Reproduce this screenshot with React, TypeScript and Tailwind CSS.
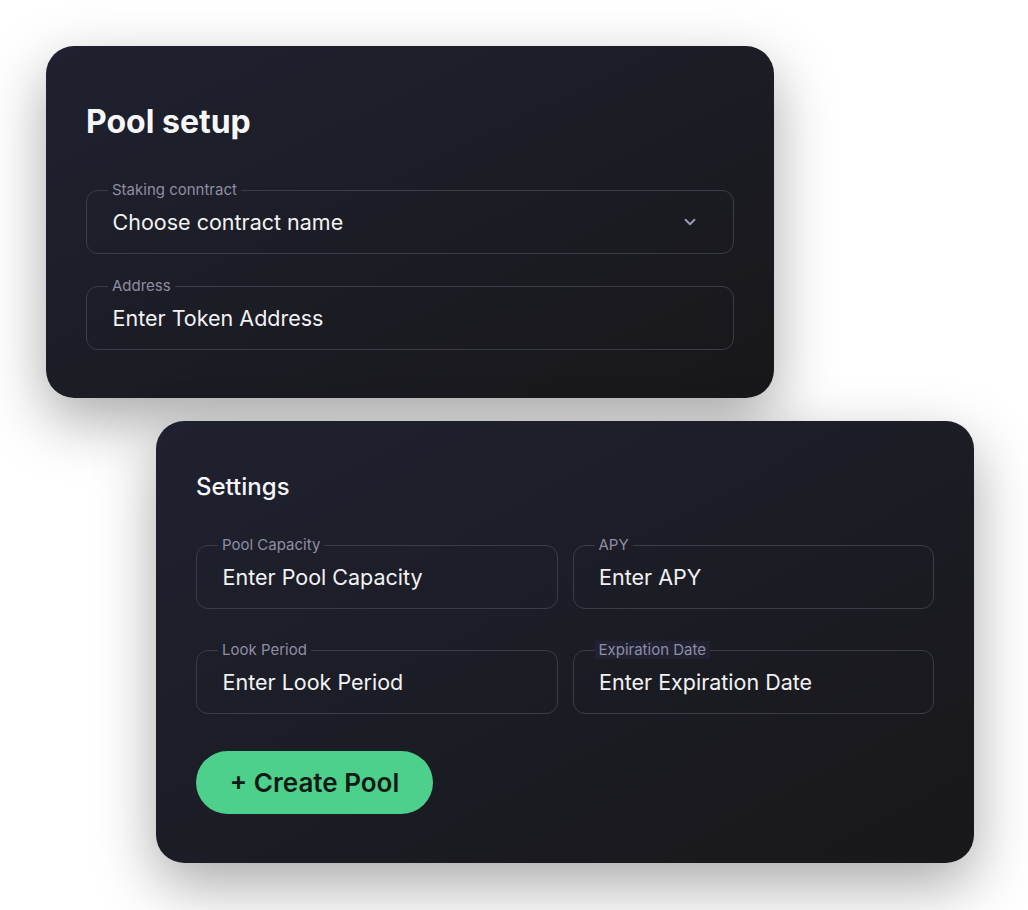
import React from "react";
import { ChevronDown } from "lucide-react";

function Field({
  label,
  value,
  chevron,
  labelClass = "",
}: {
  label: string;
  value: string;
  chevron?: boolean;
  labelClass?: string;
}) {
  return (
    <fieldset className="m-0 min-w-0 rounded-[12px] border-[1.5px] border-[#3c3c49] p-0">
      <legend
        className={`ml-[21px] px-[4px] text-[15px] leading-[18px] text-[#8f8da3] ${labelClass}`}
      >
        {label}
      </legend>
      <div className="flex items-center justify-between pl-[25.5px] pr-[34px] pt-[10px] pb-[18px]">
        <span className="text-[21.5px] leading-[26px] text-[#f2f2f4]">{value}</span>
        {chevron && (
          <ChevronDown size={18} strokeWidth={2.6} className="text-[#9c99b3]" />
        )}
      </div>
    </fieldset>
  );
}

export default function App() {
  return (
    <div
      className="h-[910px] w-[1028px] overflow-hidden bg-white pt-[46px]"
      style={{ fontFamily: "Inter, 'Noto Sans', sans-serif" }}
    >
      <div className="ml-[46px] w-[728px] rounded-[28px] bg-gradient-to-br from-[#1f2130] to-[#18181a] px-[40px] pt-[56px] pb-[48px] shadow-[0_22px_60px_rgba(0,0,0,0.34)]">
        <h1 className="text-[32px] font-bold leading-[40px] text-[#f7f7f9]">Pool setup</h1>
        <div className="mt-[39px] flex flex-col gap-[23px]">
          <Field label="Staking conntract" value="Choose contract name" chevron />
          <Field label="Address" value="Enter Token Address" />
        </div>
      </div>

      <div className="ml-[156px] mt-[23px] w-[818px] rounded-[28px] bg-gradient-to-br from-[#1f2130] to-[#18181a] px-[40px] pt-[51px] pb-[49px] shadow-[0_22px_60px_rgba(0,0,0,0.34)]">
        <h2 className="text-[24px] font-medium leading-[30px] text-[#f7f7f9]">Settings</h2>
        <div className="mt-[34px] grid grid-cols-2 gap-x-[15px] gap-y-[32px]">
          <Field label="Pool Capacity" value="Enter Pool Capacity" />
          <Field label="APY" value="Enter APY" />
          <Field label="Look Period" value="Enter Look Period" />
          <Field
            label="Expiration Date"
            value="Enter Expiration Date"
            labelClass="bg-[#202233]"
          />
        </div>
        <button className="mt-[37px] flex h-[63px] w-[237px] items-center justify-center rounded-full bg-[#4dd08b] text-[26px] font-semibold text-[#0f1a14]">
          + Create Pool
        </button>
      </div>
    </div>
  );
}
